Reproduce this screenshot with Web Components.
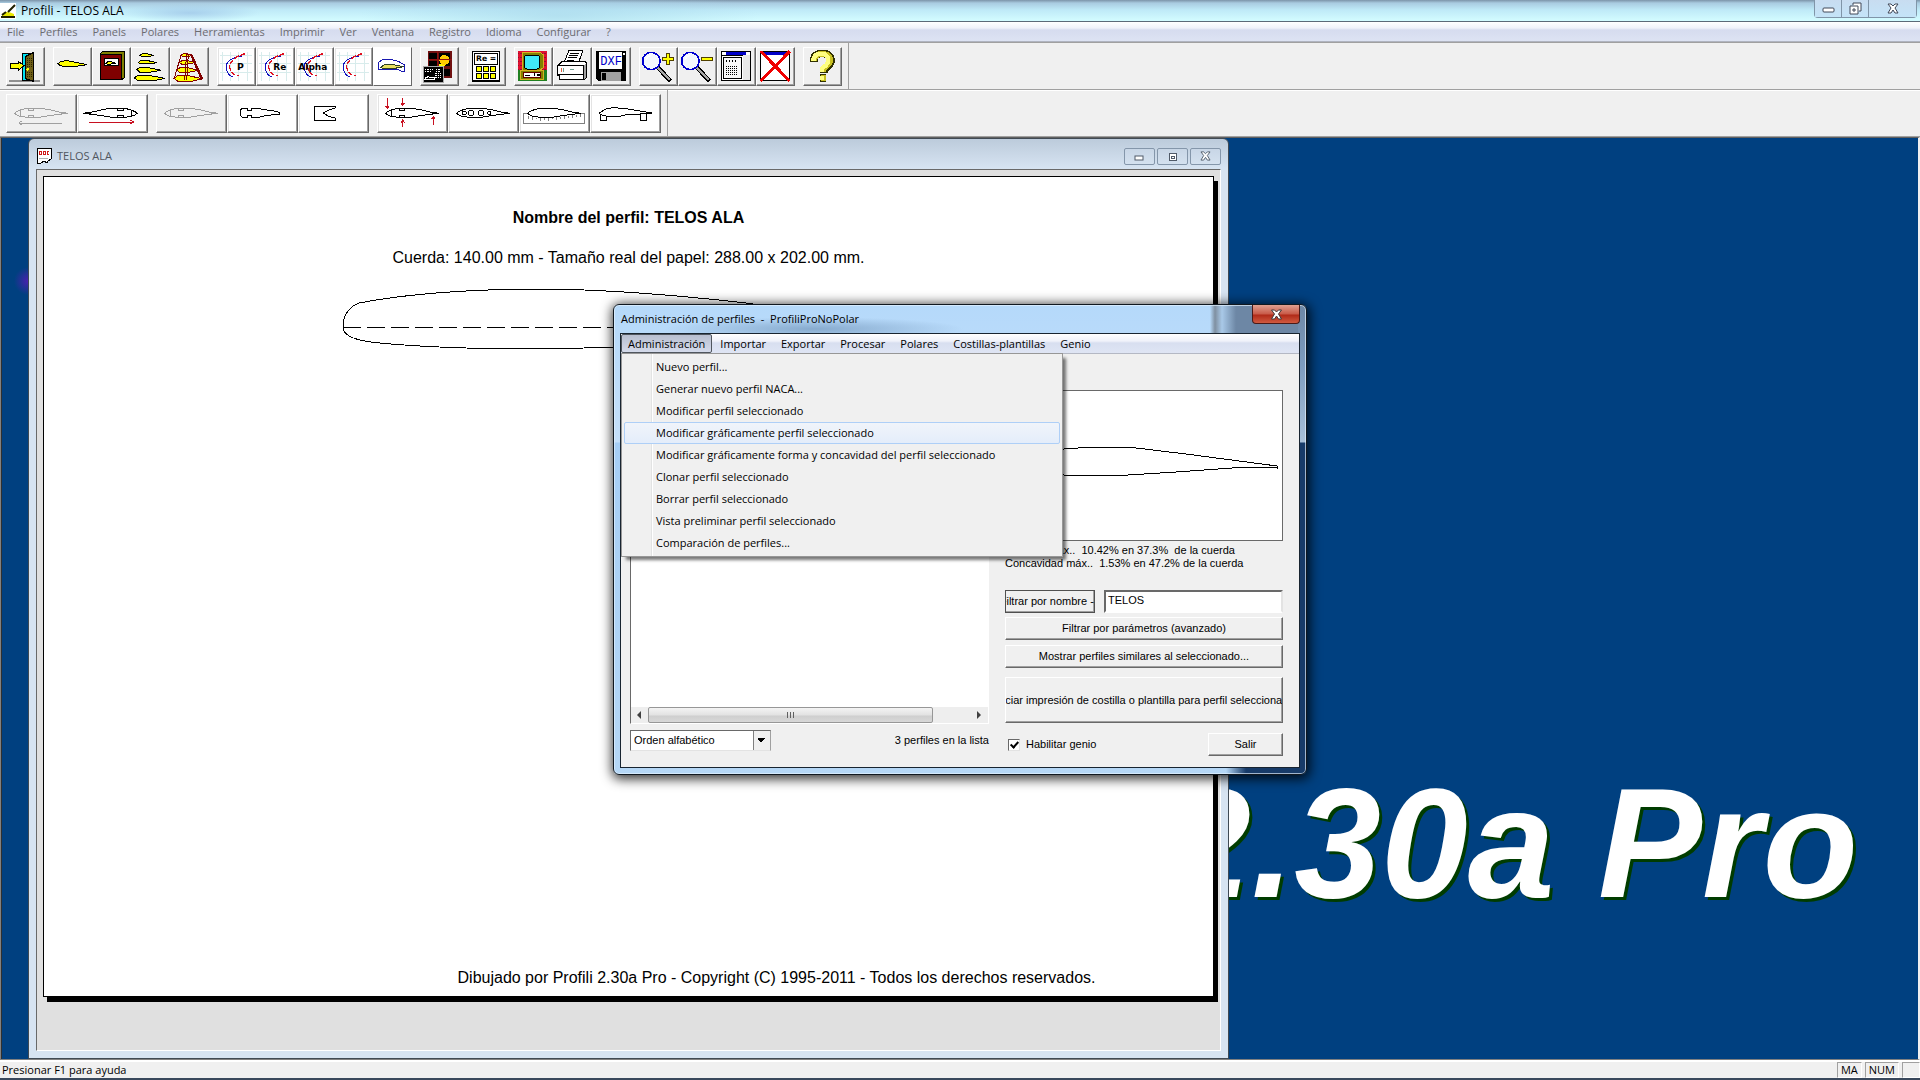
<!DOCTYPE html>
<html lang="es">
<head>
<meta charset="utf-8">
<title>Profili - TELOS ALA</title>
<style>
    html, body {
        height: 100%;
        margin: 0;
        overflow: hidden;
    }

    body {
        --ui: "Open Sans", "Noto Sans", sans-serif;
        --classic: "Liberation Sans", Arial, sans-serif;
        --face: #f0f0f0;
        --desktop: #004080;
        color: #000;
        font: 11px/16px var(--ui);
    }
</style>
</head>
<body>

<profili-app>
    <mdi-desktop>
        <mdi-window caption="TELOS ALA">
            <profile-sheet></profile-sheet>
        </mdi-window>
        <profile-dialog caption="Administración de perfiles  -  ProfiliProNoPolar"></profile-dialog>
    </mdi-desktop>
</profili-app>

<script>
// Every icon is drawn on a grid of three units per screen pixel.
const foil = 'M25 58L34 52L46 47L67 42H100L130 47L160 54L187 58L160 61L130 65L100 70H67L46 68L34 64Z';
const spars = 'M67 42V48H83V42M67 69V64H83V69M42 50V65M160 54L172 58L160 61';

const curves = `
    <path d="M15 15V102M40 15V102M65 15V102M90 15V102M10 25H105M10 50H105M10 75H105" stroke="#d8ecec" stroke-width="3"/>
    <path d="M74 27L55 31Q30 40 27 58Q28 82 47 90" fill="none" stroke="#1010c0" stroke-width="3"/>
    <path d="M84 20L64 27Q38 42 38 60Q40 76 50 82L67 87" fill="none" stroke="#e01020" stroke-width="4" stroke-dasharray="16 4"/>`;

const lens = `
    <path d="M58 63L91 98" stroke="#000" stroke-width="13" stroke-linecap="round"/>
    <path d="M58 63L90 97" stroke="#a8a8a8" stroke-width="7" stroke-linecap="round"/>
    <circle cx="37" cy="42" r="26" fill="#f4f8ff" stroke="#0000d0" stroke-width="5"/>
    <path d="M22 38Q25 26 37 25" fill="none" stroke="#fff" stroke-width="5"/>`;

const icons = {
    door: `
        <path d="M8 101H103" stroke="#909090" stroke-width="6"/>
        <path d="M48 18H82V101H48Z" fill="#00e0f0" stroke="#000" stroke-width="3"/>
        <path d="M59 28L82 17V103L59 95Z" fill="#706018" stroke="#000" stroke-width="4"/>
        <path d="M63 34H79M63 40H79M63 46H79M63 52H79M63 58H79M63 76H79M63 82H79M63 88H79" stroke="#302800" stroke-width="3" stroke-dasharray="3 3"/>
        <circle cx="65" cy="67" r="4" fill="#ff0"/>
        <path d="M14 50H36V42L54 56L36 71V63H14Z" fill="#ff0" stroke="#000" stroke-width="3"/>`,
    foil: `<path d="M15 50L24 43L42 41L64 45L102 53L80 56L60 60L32 59L20 55Z" fill="#ff0" stroke="#000" stroke-width="3"/>`,
    book: `
        <path d="M24 21L32 13H98V91L89 98Z" fill="#808000" stroke="#000" stroke-width="3"/>
        <path d="M24 21H89V98H24Z" fill="#800000" stroke="#000" stroke-width="3"/>
        <path d="M36 34H79V56H36Z" fill="#fff" stroke="#000" stroke-width="3"/>
        <path d="M41 49L48 44H56L73 49L58 51H46Z" fill="#ff0" stroke="#000" stroke-width="3"/>`,
    stack: `
        <g fill="#ff0" stroke="#000" stroke-width="3">
            <path d="M27 25L34 20H48L68 26L50 28H32Z"/><path d="M22 46L30 40H46L79 47L56 50H28Z"/>
            <path d="M17 68L26 61H48L91 70L60 75H26Z"/><path d="M10 93L22 84H48L101 94L70 101H22Z"/>
        </g>`,
    wing: `
        <g fill="#ff0" stroke="#800000" stroke-width="3">
            <path d="M34 26L40 20H50L66 26L50 29H38Z"/><path d="M28 46L36 41H52L76 47L52 51H34Z"/>
            <path d="M20 69L30 62H52L86 70L56 76H28Z"/><path d="M12 94L24 85H50L97 95L68 102H22Z"/>
        </g>
        <path d="M34 22L12 96M50 20L44 100M55 20L50 100M60 20L94 98" fill="none" stroke="#800000" stroke-width="3"/>
        <path d="M64 22L97 97" stroke="#800000" stroke-width="6"/>`,
    polarP: curves + `<text x="60" y="70" font-size="28">P</text>`,
    polarRe: curves + `<text x="52" y="70" font-size="27">Re</text>`,
    polarAlpha: curves + `<text x="10" y="70" font-size="27">Alpha</text>`,
    polar: curves,
    foilOutline: `
        <path d="M0 0H117V117H0Z" fill="#fff"/>
        <path d="M16 66V46L28 39L50 37L76 43L95 54V72H84L70 66H34L22 68Z" fill="none" stroke="#1818b0" stroke-width="3"/>
        <path d="M24 62L32 54L50 51L92 59L76 62L60 65H30Z" fill="#e8e060" stroke="#304020" stroke-width="3"/>`,
    panels: `
        <path d="M23 12H95V92H23Z" fill="#701010"/>
        <path d="M28 17H50V35H28ZM56 17H90V35H56ZM28 41H50V58H28ZM56 41H90V58H56ZM72 66H90V86H72Z" fill="#000"/>
        <path d="M76 26A16 16 0 1 1 54 54Q72 50 76 26Z" fill="#ff0"/><circle cx="73" cy="39" r="15" fill="#fc0"/>
        <path d="M53 12V60M23 38H95" stroke="#901010" stroke-width="4"/>
        <path d="M9 59H69V106H9Z" fill="#000" stroke="#aaa" stroke-width="3"/>
        <path d="M15 66H40M15 72H36M48 66H64M48 72H64M46 78H64M46 84H64M46 90H64" stroke="#fff" stroke-width="3" stroke-dasharray="4 3"/>
        <path d="M14 98Q18 88 26 90H42V98Z" fill="none" stroke="#fff" stroke-width="3"/>`,
    calculator: `
        <path d="M16 13H97V101H16Z" fill="#fff" stroke="#000" stroke-width="5"/>
        <path d="M23 19H90V52H23Z" fill="#fff" stroke="#000" stroke-width="3"/>
        <g fill="#ff0" stroke="#000" stroke-width="3"><path d="M27 58H43V73H27Z"/><path d="M48 58H64V73H48Z"/><path d="M69 58H85V73H69Z"/>
        <path d="M27 79H43V94H27Z"/><path d="M48 79H64V94H48Z"/><path d="M69 79H85V94H69Z"/></g>
        <text x="27" y="43" font-size="23">Re =</text>`,
    monitor: `
        <path d="M11 12H100V101H11Z" fill="#e01030"/><path d="M11 70H100V101H11Z" fill="#208020"/>
        <path d="M11 20H100M11 32H100M11 44H100M11 56H100M11 68H100" stroke="#901030" stroke-width="4" stroke-dasharray="4 4"/>
        <path d="M24 15H78L88 24V62L78 70H24Z" fill="#808000" stroke="#d8b020" stroke-width="3"/>
        <rect x="32" y="24" width="44" height="42" rx="6" fill="#40e8f8" stroke="#000" stroke-width="3"/>
        <path d="M20 70H88V96H20Z" fill="#808000" stroke="#d8b020" stroke-width="3"/>
        <path d="M28 77H80V90H28Z" fill="#fff" stroke="#600" stroke-width="3"/>
        <path d="M34 86H48M62 79V88M68 84H78" stroke="#000" stroke-width="4"/>`,
    printer: `
        <path d="M34 45L48 10H90L76 48Z" fill="#fff" stroke="#000" stroke-width="3"/>
        <path d="M50 18H78M47 25H74M44 32H72M41 39H64" stroke="#000" stroke-width="3"/>
        <path d="M14 56L28 42H96L100 48V90L92 98H20V84H14Z" fill="#fff" stroke="#000" stroke-width="3"/>
        <path d="M92 58L100 48V90L92 98Z" fill="#a0a0a0"/>
        <path d="M14 56H92V82H14ZM20 84V98H92V84" fill="#fff" stroke="#000" stroke-width="3"/>
        <path d="M25 62V76" stroke="#e06040" stroke-width="4"/><path d="M30 62V76M52 66H62" stroke="#70a090" stroke-width="3"/>`,
    dxf: `
        <path d="M11 12H101V101H18L11 94Z" fill="#000"/>
        <path d="M21 14H91V65H21Z" fill="#fff"/><path d="M26 75H86V101H26Z" fill="#a0a0a0"/>
        <path d="M30 79H42V99H30Z" fill="#000"/><path d="M93 18H98V24H93Z" fill="#fff"/>
        <text x="25" y="53" font-size="36" fill="#0000c8" style="font-family: 'Liberation Mono', monospace; font-weight: 400">DXF</text>`,
    zoomIn: lens + `<path d="M83 20H91V32H104V40H91V52H83V40H70V32H83Z" fill="#ff0" stroke="#504000" stroke-width="3"/>`,
    zoomOut: lens + `<path d="M69 32H104V40H69Z" fill="#ff0" stroke="#504000" stroke-width="3"/>`,
    sheet: `
        <path d="M14 13H101V101H14Z" fill="#fff" stroke="#000" stroke-width="3"/>
        <path d="M14 13H101V24H14Z" fill="#fff" stroke="#000" stroke-width="3"/><path d="M27 14H88V23H27Z" fill="#0000c8"/>
        <path d="M20 31H72V94H20Z" fill="#f8f8f8" stroke="#000" stroke-width="3"/>
        <path d="M28 42H62" stroke="#000" stroke-width="8" stroke-dasharray="3 6"/>
        <path d="M28 58H64M28 64H64M28 70H64M28 76H64M28 82H64" stroke="#000" stroke-width="3" stroke-dasharray="3 3"/>
        <path d="M78 25H98V100H78Z" fill="#e8e8e8"/>`,
    closeSheet: `
        <path d="M14 13H101V101H14Z" fill="#fff" stroke="#000" stroke-width="3"/><path d="M24 14H92V24H24Z" fill="#0000c8"/>
        <path d="M14 13L101 102M101 13L14 102" stroke="#f00000" stroke-width="9"/>`,
    // thick question mark with an olive edge on its right side
    help: `<g fill="none" stroke-linejoin="round">
            <path d="M32 45V38Q34 20 57 19Q84 20 84 43Q82 56 62 66V78M52 92H70" stroke="#303000" stroke-width="23"/>
            <path d="M34 42V38Q36 21 60 20Q82 22 82 42Q80 54 60 64V76M54 92H68" stroke="#c8c020" stroke-width="17"/>
            <path d="M31 42V38Q34 20 54 20Q77 22 76 42Q74 54 56 64V76M50 92H62" stroke="#ffff80" stroke-width="13"/>
        </g>`,

    flipLeft: `<g fill="none" stroke="#a0a0a0" stroke-width="3"><path d="${foil}"/><path d="${spars}"/><path d="M168 87H38M48 81L38 87L48 93"/></g>`,
    flipRight: `<g fill="none" stroke="#000" stroke-width="3"><g transform="translate(206 0) scale(-1 1)"><path d="${foil}"/><path d="${spars}"/></g>
        <path d="M37 84H168M158 78L170 84L158 90" stroke="#c81020"/></g>`,
    wideFoil: `<g fill="none" stroke="#a0a0a0" stroke-width="3"><path d="${foil}"/><path d="${spars}"/></g>`,
    rib: `<path d="M39 63V49L46 43H60V50H74V43H94L112 47L148 52L157 55V62H140L112 66L96 70H74V63H60V70H46Z" fill="none" stroke="#000" stroke-width="3"/>`,
    template: `<path d="M48 36H111V42L92 48L76 57L92 67L111 72V78H48Z" fill="none" stroke="#000" stroke-width="3"/>`,
    thickness: `<g fill="none" stroke="#000" stroke-width="3"><path d="${foil}"/><path d="${spars}"/>
        <path d="M31 12V44M26 36L31 44L36 36M77 12V35M72 27L77 35L82 27M77 100V78M72 86L77 78L82 86M169 94V67M164 75L169 67L174 75" stroke="#c81020"/></g>`,
    holes: `<g fill="none" stroke="#000" stroke-width="3"><path d="${foil}"/><circle cx="49" cy="57" r="6"/><circle cx="69" cy="57" r="8"/><circle cx="99" cy="57" r="8"/><circle cx="124" cy="57" r="5"/></g>`,
    jig: `<g fill="none" stroke-width="3"><path d="M14 57H195V87H14Z" stroke="#808080"/><path d="${foil}" fill="#fff" stroke="#000"/>
        <path d="M28 66V76M40 68V78M52 71V76M64 72V80M76 72V77M88 72V80M100 71V76M112 70V79M124 68V74M136 67V76M148 66V72M160 64V73M172 62V69M184 60V69" stroke="#808080"/></g>`,
    supports: `<g fill="none" stroke="#000" stroke-width="3"><path d="M28 57L45 46L66 41L100 43L187 57L150 60L110 62L90 67L52 67L32 62Z"/><path d="M32 63V79H50V67M152 61V79H168V61"/></g>`
};

class ToolButton extends HTMLElement {

    constructor() {
        super();
        this.shadow = this.attachShadow({ mode: 'open' });
    }

    connectedCallback() {
        const wide = this.hasAttribute('wide');

        this.shadow.innerHTML =
        `
        <style>
            :host { display: block; }
            button {
                background: var(--face);
                border: 1px solid;
                border-color: #fff #696969 #696969 #fff;
                box-shadow: inset -1px -1px #a0a0a0;
                display: block;
                padding: 0;
            }
            :host([white]) button { background: #fff; box-shadow: inset -1px -1px #a0a0a0, inset 1px 1px #e3e3e3; }
            svg { display: block; height: 37px; shape-rendering: crispEdges; width: ${wide ? 69 : 37}px; }
            text { font-family: "DejaVu Sans", sans-serif; font-weight: 700; }
        </style>
        <button type="button" aria-label="${this.getAttribute('name')}" ${this.hasAttribute('off') ? 'disabled' : ''}>
            <svg viewBox="3 3 ${wide ? 207 : 111} 111" aria-hidden="true">${icons[this.getAttribute('icon')]}</svg>
        </button>
        `;
    }
}

customElements.define('tool-button', ToolButton);


class ToolBar extends HTMLElement {

    constructor() {
        super();
        this.shadow = this.attachShadow({ mode: 'open' });
        this.shadow.innerHTML =
        `
        <style>
            :host {
                border-bottom: 1px solid #a0a0a0;
                box-shadow: 0 1px #fff;
                display: flex;
            }
            div {
                border-right: 1px solid #a0a0a0;
                display: flex;
                gap: 8px;
                padding: 4px 6px 3px;
            }
            ::slotted(span) { display: flex; }
        </style>
        <div role="toolbar"><slot></slot></div>
        `;
    }
}

customElements.define('tool-bar', ToolBar);


class ProfiliApp extends HTMLElement {

    constructor() {
        super();
        this.shadow = this.attachShadow({ mode: 'open' });
    }

    connectedCallback() {
        const menu = ['File', 'Perfiles', 'Panels', 'Polares', 'Herramientas', 'Imprimir', 'Ver', 'Ventana', 'Registro', 'Idioma', 'Configurar', '?'];

        this.shadow.innerHTML =
        `
        <style>
            :host {
                background: var(--face);
                display: flex;
                flex-direction: column;
                height: 100vh;
            }

            header {
                align-items: center;
                background:
                    radial-gradient(ellipse 70px 9px at 190px 13px, #8fb4e088, transparent),
                    radial-gradient(ellipse 200px 30px at 560px 16px, #a4d4e899, transparent),
                    linear-gradient(#7c93a8, #a9cbe0 3px, #bfeaf8 10px, #d2fbff 20px);
                border-bottom: 1px solid #5c6a78;
                display: flex;
                height: 21px;
            }
            header svg { background: #fff; margin-right: 5px; }
            h1 { flex: 1; font: inherit; font-size: 12px; margin: 0; }
            .controls {
                align-self: flex-start;
                border: 1px solid #8095a8;
                border-radius: 0 0 4px 4px;
                border-top: 0;
                display: flex;
                margin-right: 3px;
            }
            .controls button {
                background: linear-gradient(#c8dcf0, #c4e4f8);
                border: 0;
                border-right: 1px solid #8095a8;
                height: 17px;
                padding: 0;
                width: 27px;
            }
            .controls button:last-child { border: 0; width: 47px; }
            .controls svg { background: none; display: block; margin: auto; }

            nav {
                background: linear-gradient(#fff, #f0f2fa 6px, #d6dcef 8px, #dde3f3);
                border-bottom: 1px solid #b0b4c0;
                display: flex;
                gap: 15px;
                height: 19px;
                padding: 0 7px;
            }
            nav button {
                background: none;
                border: 0;
                color: #6c6c70;
                font: inherit;
                line-height: 19px;
                padding: 0;
            }
            tool-bar:first-of-type { border-top: 1px solid #a0a0a0; }

            main { display: flex; flex: 1; min-height: 0; }

            footer {
                align-items: center;
                border-bottom: 2px solid #39485c;
                border-top: 2px solid #fff;
                display: flex;
                gap: 3px;
                height: 16px;
                padding-left: 2px;
            }
            footer p { flex: 1; margin: 0; }
            footer output {
                border: 1px solid;
                border-color: #a0a0a0 #fff #fff #a0a0a0;
                box-sizing: border-box;
                height: 16px;
                line-height: 14px;
                min-width: 18px;
                padding: 0 3px;
            }
        </style>

        <header>
            <svg width="16" height="16" viewBox="0 0 16 16"><path d="M2 11Q6 7 14 11V13H2Z" fill="#e8e800"/><path d="M1 14H15M2 12L6 9M15 2L8 9" stroke="#202000" stroke-width="2"/></svg>
            <h1>Profili - TELOS ALA</h1>
            <div class="controls">
                <button type="button" aria-label="Minimizar"><svg width="13" height="9" viewBox="0 0 13 9"><rect x="1" y="4" width="11" height="4" rx="1" fill="#fff" stroke="#404858"/></svg></button>
                <button type="button" aria-label="Restaurar"><svg width="13" height="13" viewBox="0 0 13 13"><path d="M4 3V1H12V9H10M1 4H9V12H1ZM4 7H6V9H4Z" fill="#fff" stroke="#404858"/></svg></button>
                <button type="button" aria-label="Cerrar"><svg width="12" height="11" viewBox="0 0 12 11"><path d="M1 1H4L6 3L8 1H11L8 5L11 10H8L6 7L4 10H1L4 5Z" fill="#fff" stroke="#404858"/></svg></button>
            </div>
        </header>

        <nav>${menu.map(item => `<button type="button">${item}</button>`).join('')}</nav>

        <tool-bar>
            <span><tool-button icon="door" name="Salir"></tool-button></span>
            <span>
                <tool-button icon="foil" name="Perfiles"></tool-button>
                <tool-button icon="book" name="Biblioteca"></tool-button>
                <tool-button icon="stack" name="Costillas"></tool-button>
                <tool-button icon="wing" name="Panels"></tool-button>
            </span>
            <span>
                <tool-button white icon="polarP" name="Polares P"></tool-button>
                <tool-button white icon="polarRe" name="Polares Re"></tool-button>
                <tool-button white icon="polarAlpha" name="Polares Alpha"></tool-button>
                <tool-button white icon="polar" name="Polares"></tool-button>
                <tool-button white icon="foilOutline" name="Contorno"></tool-button>
            </span>
            <span><tool-button icon="panels" name="Procesar"></tool-button></span>
            <span><tool-button icon="calculator" name="Calcular Re"></tool-button></span>
            <span>
                <tool-button icon="monitor" name="Ver"></tool-button>
                <tool-button icon="printer" name="Imprimir"></tool-button>
                <tool-button icon="dxf" name="Exportar DXF"></tool-button>
            </span>
            <span>
                <tool-button icon="zoomIn" name="Ampliar"></tool-button>
                <tool-button icon="zoomOut" name="Reducir"></tool-button>
                <tool-button icon="sheet" name="Ventana"></tool-button>
                <tool-button icon="closeSheet" name="Cerrar ventana"></tool-button>
            </span>
            <span><tool-button icon="help" name="Ayuda"></tool-button></span>
        </tool-bar>

        <tool-bar>
            <span>
                <tool-button wide off icon="flipLeft" name="Borde a la izquierda"></tool-button>
                <tool-button wide white icon="flipRight" name="Borde a la derecha"></tool-button>
            </span>
            <span>
                <tool-button wide off icon="wideFoil" name="Perfil"></tool-button>
                <tool-button wide white icon="rib" name="Costilla"></tool-button>
                <tool-button wide white icon="template" name="Plantilla"></tool-button>
            </span>
            <span>
                <tool-button wide white icon="thickness" name="Espesor"></tool-button>
                <tool-button wide white icon="holes" name="Agujeros"></tool-button>
                <tool-button wide white icon="jig" name="Cuna"></tool-button>
                <tool-button wide white icon="supports" name="Soportes"></tool-button>
            </span>
        </tool-bar>

        <main><slot></slot></main>

        <footer>
            <p>Presionar F1 para ayuda</p>
            <output>MA</output><output>NUM</output><output></output>
        </footer>
        `;
    }
}

customElements.define('profili-app', ProfiliApp);


class MdiDesktop extends HTMLElement {

    constructor() {
        super();
        this.shadow = this.attachShadow({ mode: 'open' });
        this.shadow.innerHTML =
        `
        <style>
            :host {
                align-items: flex-end;
                background: radial-gradient(circle 14px at 27px 143px, #4a20b0, transparent) var(--desktop);
                border: 1px solid #808080;
                border-right: 2px solid #f0f0f0;
                border-top-color: #606060;
                box-shadow: inset 1px 0 #303030;
                display: flex;
                flex: 1;
                justify-content: flex-end;
                overflow: hidden;
                position: relative;
            }
            p {
                color: #fff;
                font: italic 700 156px/180px var(--classic);
                margin: 0 60px 126px 0;
                text-shadow: 3px 3px #003c00;
                white-space: nowrap;
            }
        </style>
        <p>2.30a Pro</p>
        <slot></slot>
        `;
    }
}

customElements.define('mdi-desktop', MdiDesktop);


class MdiWindow extends HTMLElement {

    constructor() {
        super();
        this.shadow = this.attachShadow({ mode: 'open' });
    }

    connectedCallback() {
        this.shadow.innerHTML =
        `
        <style>
            :host {
                background: linear-gradient(#bccbdb, #d7e4f2 30px);
                border: 1px solid #404a54;
                border-radius: 6px 6px 0 0;
                bottom: 0;
                box-sizing: border-box;
                display: flex;
                flex-direction: column;
                left: 27px;
                padding: 0 7px 7px;
                position: absolute;
                top: 0;
                width: 1201px;
            }
            header {
                align-items: center;
                color: #50565e;
                display: flex;
                gap: 2px;
                height: 30px;
                padding-top: 4px;
                box-sizing: border-box;
            }
            h2 { flex: 1; font: inherit; margin: 0 0 0 3px; }
            button {
                background: linear-gradient(#c8d6e6, #d4e1ef);
                border: 1px solid #8496aa;
                border-radius: 2px;
                height: 17px;
                padding: 0;
                width: 31px;
            }
            button svg { display: block; margin: auto; }
            section {
                background: #e0e0e0;
                border: 1px solid;
                border-color: #696969 #fff #fff #696969;
                display: flex;
                flex: 1;
            }
        </style>
        <header>
            <svg width="16" height="16" viewBox="0 0 16 16" shape-rendering="crispEdges">
                <path d="M1 0H15V11L12 13L11 15L8 13L5 15H1Z" fill="#fff" stroke="#000"/>
                <path d="M3 3H5V6H3ZM7 3H9V6H7ZM13 3H11V6H13" fill="none" stroke="#d01818"/><path d="M3 10H12" stroke="#b0b0b0"/>
            </svg>
            <h2>${this.getAttribute('caption')}</h2>
            <button type="button" aria-label="Minimizar"><svg width="11" height="9" viewBox="0 0 11 9"><rect x="1" y="4" width="8" height="4" fill="#fff" stroke="#505a68"/></svg></button>
            <button type="button" aria-label="Maximizar"><svg width="9" height="9" viewBox="0 0 9 9" shape-rendering="crispEdges"><path d="M1 1H8V8H1ZM3 4H6V6H3Z" fill="#fff" stroke="#505a68"/></svg></button>
            <button type="button" aria-label="Cerrar"><svg width="11" height="10" viewBox="0 0 12 11"><path d="M1 1H4L6 3L8 1H11L8 5L11 10H8L6 7L4 10H1L4 5Z" fill="#fff" stroke="#505a68"/></svg></button>
        </header>
        <section><slot></slot></section>
        `;
    }
}

customElements.define('mdi-window', MdiWindow);


class ProfileSheet extends HTMLElement {

    constructor() {
        super();
        this.shadow = this.attachShadow({ mode: 'open' });
        this.shadow.innerHTML =
        `
        <style>
            :host {
                background: #fff;
                border: 1px solid #000;
                box-shadow: 4px 5px #000;
                display: flex;
                flex: 1;
                flex-direction: column;
                font: 16px/20px var(--classic);
                margin: 6px 6px 53px;
                text-align: center;
            }
            h3 { font: inherit; font-weight: 700; margin: 31px 0 20px; }
            p { margin: 0; }
            svg { flex: none; margin: 20px auto auto; }
            footer { margin: 0 0 8px 296px; }
        </style>
        <h3>Nombre del perfil: TELOS ALA</h3>
        <p>Cuerda: 140.00 mm - Tamaño real del papel: 288.00 x 202.00 mm.</p>
        <svg width="574" height="64" viewBox="0 0 574 64" fill="none" stroke="#000" shape-rendering="crispEdges" aria-hidden="true">
            <path d="M1 40V34Q4 20 17 15Q90 1 205 1Q290 2 404 15Q500 29 573 40Q500 45 420 50Q290 61 170 61Q90 60 38 55Q2 52 1 40Z"/>
            <path d="M1 39H573" stroke-dasharray="18 6"/>
        </svg>
        <footer>Dibujado por Profili 2.30a Pro - Copyright (C) 1995-2011 - Todos los derechos reservados.</footer>
        `;
    }
}

customElements.define('profile-sheet', ProfileSheet);


class PopMenu extends HTMLElement {

    constructor() {
        super();
        this.shadow = this.attachShadow({ mode: 'open' });
        this.shadow.innerHTML =
        `
        <style>
            :host {
                background: linear-gradient(90deg, transparent 29px, #e2e3e3 29px 30px, #fff 30px 31px, transparent 31px) #f0f0f0;
                border: 1px solid #979797;
                box-shadow: 4px 4px 3px -1px #0008;
                display: flex;
                flex-direction: column;
                padding: 2px;
            }
            ::slotted(button) {
                background: none;
                border: 1px solid transparent;
                border-radius: 2px;
                font: inherit;
                height: 22px;
                line-height: 20px;
                padding: 0 0 0 31px;
                text-align: left;
                white-space: nowrap;
            }
            ::slotted(button.active) { background: linear-gradient(#f0f4fa, #e4edfa); border-color: #aecff7; }
        </style>
        <slot></slot>
        `;
    }
}

customElements.define('pop-menu', PopMenu);


class ProfileDialog extends HTMLElement {

    constructor() {
        super();
        this.shadow = this.attachShadow({ mode: 'open' });
    }

    connectedCallback() {
        const menu = ['Importar', 'Exportar', 'Procesar', 'Polares', 'Costillas-plantillas', 'Genio'];

        this.shadow.innerHTML =
        `
        <style>
            :host {
                background:
                    linear-gradient(#6d87a5, #7d9cbf 60px, #a8c0d8 137px, #173b69 138px) right / 8px 100% no-repeat,
                    linear-gradient(90deg, transparent, #173b69 20px) right bottom / 80px 7px no-repeat,
                    radial-gradient(ellipse 150px 12px at 200px 24px, #6f93b8aa, transparent),
                    linear-gradient(90deg, transparent calc(100% - 96px), #7f8fa0 calc(100% - 91px), #a9c9e8 calc(100% - 84px), #6d87a5 calc(100% - 70px)) top / 100% 30px no-repeat,
                    linear-gradient(#b5d9fa, #c5e0fa 137px, #a6cef5 138px, #b5d7f6);
                border: 1px solid #101820;
                border-radius: 6px;
                box-shadow: inset 0 0 0 1px #e6f3ffaa, 1px 2px 12px 2px #000c;
                box-sizing: border-box;
                left: 612px;
                padding: 0 6px 6px;
                position: absolute;
                top: 166px;
                width: 694px;
            }

            header { align-items: center; display: flex; height: 28px; }
            h2 { flex: 1; font: inherit; margin: 0 0 0 1px; white-space: pre; }
            .close {
                align-self: flex-start;
                background: linear-gradient(#e0a090, #c85a48 9px, #b02a18 10px, #d05a40);
                border: 1px solid #4a1a18;
                border-radius: 0 0 4px 4px;
                border-top: 0;
                height: 19px;
                padding: 0;
                width: 48px;
            }
            .close svg { display: block; margin: auto; }

            .client { background: var(--face); border: 1px solid #182430; position: relative; }
            nav {
                background: linear-gradient(#fff, #f0f2fa 7px, #d8dff0 9px, #dfe5f4);
                border-bottom: 1px solid #b4b8c4;
                display: flex;
                gap: 15px;
                height: 19px;
            }
            nav button {
                background: none;
                border: 0;
                font: inherit;
                line-height: 18px;
                padding: 0;
            }
            nav .open {
                background: linear-gradient(#b8bfd0, #d4daea);
                border: 1px solid #50565e;
                border-radius: 2px;
                line-height: 16px;
                margin-right: -7px;
                padding: 0 6px;
            }
            pop-menu { left: 0; position: absolute; top: 19px; width: 436px; z-index: 1; }

            form {
                display: grid;
                font: 11px/13px var(--classic);
                gap: 16px;
                grid-template-columns: 359px 1fr;
                padding: 36px 16px 11px 9px;
            }
            .left, .right { display: flex; flex-direction: column; min-width: 0; }

            .list {
                background: #fff;
                border: 1px solid;
                border-color: #696969 #fff #fff #696969;
                display: flex;
                flex: 1;
                flex-direction: column;
                justify-content: flex-end;
            }
            .scroll { background: #eee; display: flex; height: 16px; }
            .scroll i { flex: 0 0 17px; position: relative; }
            .scroll i::after {
                border: 4px solid transparent;
                border-left-width: 0;
                border-right-color: #404040;
                content: "";
                left: 6px;
                position: absolute;
                top: 4px;
            }
            .scroll i:last-child::after { border-left: 4px solid #404040; border-right-width: 0; }
            .scroll span { flex: 1; }
            .scroll b {
                background: repeating-linear-gradient(90deg, #606060 0 1px, transparent 1px 3px) center / 8px 6px no-repeat, linear-gradient(#f4f4f4, #e2e2e2 7px, #cfcfcf 8px, #d8d8d8);
                border: 1px solid #979797;
                border-radius: 2px;
                box-sizing: border-box;
                flex: 0 0 285px;
            }
            .row { align-items: center; display: flex; justify-content: space-between; }
            .left .row { height: 32px; }

            select {
                appearance: none;
                background:
                    conic-gradient(from -45deg at 50% 100%, #000 90deg, transparent 0) right 5px center / 8px 4px no-repeat,
                    linear-gradient(#f0f0f0, #f0f0f0) right / 16px 100% no-repeat,
                    linear-gradient(#808080, #808080) right 16px top / 1px 100% no-repeat #fff;
                border: 1px solid;
                border-color: #696969 #a0a0a0 #e3e3e3 #696969;
                border-radius: 0;
                font: inherit;
                height: 21px;
                padding: 0 3px;
                width: 141px;
            }

            .preview { background: #fff; border: 1px solid #696969; box-sizing: border-box; height: 151px; margin-bottom: 3px; }
            .preview svg { display: block; width: 100%; }
            p { margin: 0; white-space: pre; }

            .push {
                align-items: center;
                background: var(--face);
                border: 1px solid;
                border-color: #fff #696969 #696969 #fff;
                box-shadow: inset -1px -1px #a0a0a0;
                display: flex;
                font: inherit;
                height: 23px;
                justify-content: center;
                overflow: hidden;
                padding: 0;
                white-space: nowrap;
            }
            .filter { gap: 9px; margin: 20px 0 4px; }
            .filter .push { border-color: #505050; flex: 0 0 90px; }
            input[type=text] {
                border: 2px solid;
                border-color: #696969 #e3e3e3 #fff #696969;
                box-sizing: border-box;
                flex: 1;
                font: inherit;
                height: 23px;
                min-width: 0;
                padding: 0 2px 4px;
            }
            .similar { margin: 5px 0 9px; }
            .print { height: 46px; margin-bottom: 10px; }
            .exit { width: 75px; }
            label { align-items: center; display: flex; gap: 6px; }
            input[type=checkbox] {
                appearance: none;
                background: #fff;
                border: 1px solid;
                border-color: #696969 #e3e3e3 #e3e3e3 #696969;
                height: 12px;
                margin: 0 0 0 3px;
                width: 12px;
            }
            input:checked::after {
                border: solid #000;
                border-width: 0 2px 2px 0;
                box-sizing: border-box;
                content: "";
                display: block;
                height: 8px;
                margin: 0 auto;
                transform: rotate(42deg);
                width: 5px;
            }
        </style>

        <header>
            <h2>${this.getAttribute('caption')}</h2>
            <button class="close" type="button" aria-label="Cerrar"><svg width="13" height="11" viewBox="0 0 12 11"><path d="M1 1H4L6 3L8 1H11L8 5L11 10H8L6 7L4 10H1L4 5Z" fill="#fff" stroke="#403838"/></svg></button>
        </header>
        <div class="client">
            <nav><button class="open" type="button">Administración</button>${menu.map(item => `<button type="button">${item}</button>`).join('')}</nav>
            <pop-menu>
                <button type="button">Nuevo perfil...</button>
                <button type="button">Generar nuevo perfil NACA...</button>
                <button type="button">Modificar perfil seleccionado</button>
                <button type="button" class="active">Modificar gráficamente perfil seleccionado</button>
                <button type="button">Modificar gráficamente forma y concavidad del perfil seleccionado</button>
                <button type="button">Clonar perfil seleccionado</button>
                <button type="button">Borrar perfil seleccionado</button>
                <button type="button">Vista preliminar perfil seleccionado</button>
                <button type="button">Comparación de perfiles...</button>
            </pop-menu>
            <form>
                <div class="left">
                    <div class="list"><div class="scroll"><i></i><b></b><span></span><i></i></div></div>
                    <div class="row">
                        <select aria-label="Orden"><option>Orden alfabético</option></select>
                        <span>3 perfiles en la lista</span>
                    </div>
                </div>
                <div class="right">
                    <div class="preview">
                        <svg viewBox="0 0 276 149" fill="none" stroke="#000" shape-rendering="crispEdges" aria-hidden="true">
                            <path d="M5 72Q20 58 58 58L86 56H122L180 63L271 75V77L240 76L170 81L122 84H58Q10 84 5 72Z"/>
                        </svg>
                    </div>
                    <p>Espesor máx..  10.42% en 37.3%  de la cuerda</p>
                    <p>Concavidad máx..  1.53% en 47.2% de la cuerda</p>
                    <div class="row filter">
                        <button class="push" type="button">Filtrar por nombre -&gt;</button>
                        <input type="text" value="TELOS" aria-label="Nombre">
                    </div>
                    <button class="push" type="button">Filtrar por parámetros (avanzado)</button>
                    <button class="push similar" type="button">Mostrar perfiles similares al seleccionado...</button>
                    <button class="push print" type="button">Iniciar impresión de costilla o plantilla para perfil seleccionado</button>
                    <div class="row">
                        <label><input type="checkbox" checked>Habilitar genio</label>
                        <button class="push exit" type="button">Salir</button>
                    </div>
                </div>
            </form>
        </div>
        `;
    }
}

customElements.define('profile-dialog', ProfileDialog);
</script>
</body>
</html>
